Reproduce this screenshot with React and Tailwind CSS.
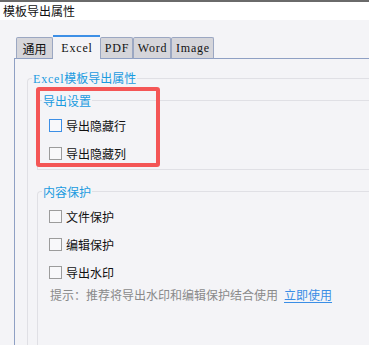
const cjk = '"Noto Sans CJK SC", "Noto Sans", sans-serif';
const serif = '"Liberation Serif", "Noto Sans CJK SC", serif';

const Checkbox = ({ label, active }) => (
  <div className="flex items-center h-[28px] pl-[7px] gap-[4px]">
    <span
      className={`w-[13px] h-[13px] border bg-[#f8f8fa] ${active ? 'border-[#3d8fe6]' : 'border-[#9c9c9c]'}`}
    />
    <span className="text-[12px] leading-[13px] text-[#111]">{label}</span>
  </div>
);

const Tab = ({ label, width, latin }) => (
  <div
    className={`h-[22px] ${width} border border-[#9ba7c2] border-b-[#8fa0c4] bg-[#d5d5da] rounded-t-[2px] flex items-center justify-center text-[#111]`}
  >
    {latin ? (
      <span className="text-[12px] tracking-[0.8px] pl-[1px]" style={{ fontFamily: serif }}>
        {label}
      </span>
    ) : (
      <span className="text-[12px] leading-[13px]">{label}</span>
    )}
  </div>
);

export default function App() {
  return (
    <div
      className="w-[369px] h-[345px] overflow-hidden bg-[#f4f4f7] flex flex-col"
      style={{ fontFamily: cjk }}
    >
      <div className="border-t-2 border-[#6a6a6a] h-[27px] bg-white flex items-center pl-[3px] text-[12px] text-[#111]">
        模板导出属性
      </div>

      <div className="flex items-end mt-[15px] pl-[14px]">
        <div className="w-[2px] border-b border-[#8fa0c4]" />
        <Tab label="通用" width="w-[37px]" />
        <div className="w-[47px] h-[24px] border-t-2 border-[#3d8fe6] bg-[#f4f4f7] flex items-center justify-center text-[#111]">
          <span className="text-[12px] tracking-[0.8px] pl-[1px]" style={{ fontFamily: serif }}>
            Excel
          </span>
        </div>
        <Tab label="PDF" width="w-[33px]" latin />
        <Tab label="Word" width="w-[38px]" latin />
        <Tab label="Image" width="w-[43px]" latin />
        <div className="flex-1 border-b border-[#8fa0c4]" />
      </div>

      <div className="flex-1 ml-[14px] border-l border-[#8fa0c4] relative">
        <fieldset className="mt-[12px] ml-[12px] border border-r-0 border-[#e0e0e5] rounded-tl-[4px] pl-[4px] pb-[80px]">
          <legend className="px-[1px] text-[12px] leading-[13px] text-[#1a9be0]">
            <span className="tracking-[0.8px]" style={{ fontFamily: serif }}>
              Excel
            </span>
            模板导出属性
          </legend>

          <fieldset className="mt-[8px] ml-[5px] border border-r-0 border-[#e0e0e5] rounded-tl-[4px] pl-[4px] pt-[4px] pb-[2px]">
            <legend className="px-[1px] text-[12px] leading-[13px] text-[#1a9be0]">导出设置</legend>
            <Checkbox label="导出隐藏行" active />
            <Checkbox label="导出隐藏列" />
          </fieldset>

          <fieldset className="mt-[15px] ml-[5px] border border-r-0 border-[#e0e0e5] rounded-tl-[4px] pl-[4px] pt-[4px] pb-[60px]">
            <legend className="px-[1px] text-[12px] leading-[13px] text-[#1a9be0]">内容保护</legend>
            <Checkbox label="文件保护" />
            <Checkbox label="编辑保护" />
            <Checkbox label="导出水印" />
            <div className="h-[18px] flex items-center pl-[8px] gap-[6px] text-[12px]">
              <span className="text-[#8a8a8a]">提示：推荐将导出水印和编辑保护结合使用</span>
              <span className="text-[#3a8ee6] underline underline-offset-2">立即使用</span>
            </div>
          </fieldset>
        </fieldset>

        <div className="absolute left-[21px] top-[28px] w-[124px] h-[80px] border-4 border-[#f45656] rounded-[3px]" />
      </div>
    </div>
  );
}
